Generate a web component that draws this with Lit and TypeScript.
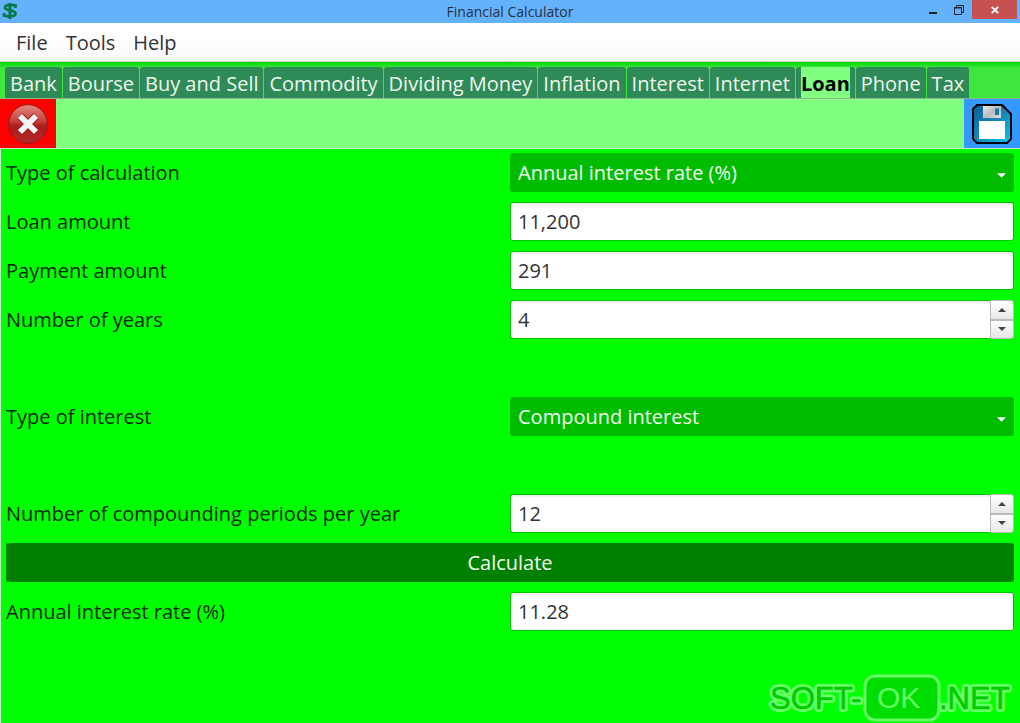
import { LitElement, html, css, svg } from "lit";
import { customElement, property, state } from "lit/decorators.js";

const TABS = [
  "Bank", "Bourse", "Buy and Sell", "Commodity", "Dividing Money", "Inflation",
  "Interest", "Internet", "Loan", "Phone", "Tax",
];

@customElement("number-spinner")
class NumberSpinner extends LitElement {
  @property({ type: Number }) value = 0;
  @property() label = "";

  static styles = css`
    :host { display: block; height: 39px; }
    .box { display: flex; height: 100%; box-sizing: border-box; }
    .input {
      flex: 1; min-width: 0; box-sizing: border-box; height: 100%;
      border: 1px solid #00c400; border-right: 0; border-radius: 3px 0 0 3px;
      padding: 0 7px; background: #fff; color: #333;
      font: inherit; appearance: textfield; outline: none;
      box-shadow: inset 0 2px 1px #eee;
    }
    .input::-webkit-inner-spin-button { appearance: none; margin: 0; }
    .steps { display: flex; flex-direction: column; width: 24px; }
    .step {
      flex: 1; display: grid; place-items: center; padding: 0;
      border: 1px solid #bbb; background: linear-gradient(#fff, #e6e6e6);
    }
    .step:first-child { border-radius: 0 3px 0 0; }
    .step:last-child { border-radius: 0 0 3px 0; }
    .arrow { display: block; width: 8px; height: 4px; fill: #444; }
  `;

  render() {
    return html`
      <div class="box">
        <input class="input" type="number" aria-label=${this.label} .value=${String(this.value)}
          @input=${(e: Event) => (this.value = Number((e.target as HTMLInputElement).value))} />
        <div class="steps">
          <button class="step" type="button" aria-label="Increase" @click=${() => this.value++}>
            <svg class="arrow" viewBox="0 0 8 4"><path d="M0 4L4 0L8 4Z" /></svg>
          </button>
          <button class="step" type="button" aria-label="Decrease" @click=${() => this.value--}>
            <svg class="arrow" viewBox="0 0 8 4"><path d="M0 0L4 4L8 0Z" /></svg>
          </button>
        </div>
      </div>
    `;
  }
}

@customElement("app-root")
class AppRoot extends LitElement {
  @state() private active = "Loan";

  static styles = css`
    :host {
      display: flex; flex-direction: column; min-height: 100vh; position: relative;
      font-family: "Open Sans", "Noto Sans", sans-serif; font-size: 20px; line-height: 28px;
      color: #002800; background: #0f0;
    }
    button { font: inherit; cursor: pointer; }
    .titlebar {
      display: grid; grid-template-columns: 1fr auto 1fr; height: 23px;
      background: #64b1fc; color: #26323f;
    }
    .logo { width: 16px; height: 18px; margin: 2px; }
    .title { margin: 0; font-size: 14px; line-height: 23px; font-weight: 400; }
    .window { display: flex; justify-content: flex-end; padding-right: 3px; }
    .win { border: 0; padding: 0; height: 19px; width: 26px; background: none; }
    .win svg { display: block; margin: auto; }
    .win.close { width: 45px; background: #c75050; }
    .menu {
      display: flex; gap: 18px; align-items: center; height: 39px; padding: 2px 0 0 16px;
      background: linear-gradient(#fff 30%, #f8f8f8); border-bottom: 1px solid #ccc;
      box-sizing: border-box;
    }
    .item { border: 0; padding: 0; background: none; color: #333; }
    .tabs {
      display: flex; gap: 1px; height: 37px; box-sizing: border-box; padding: 5px 5px 0;
      background: linear-gradient(#00d800, #3ee63e 6px); border-bottom: 1px solid #8fb48f;
    }
    .tab {
      border: 0; border-radius: 3px 3px 0 0; padding: 0 5px; background: #2e8b57;
      color: #eef6ee; white-space: nowrap;
    }
    .tab.active .name { background: #80ff80; color: #000; font-weight: 700; }
    .name { display: block; height: 31px; line-height: 33px; }
    .toolbar {
      display: flex; justify-content: space-between; height: 50px; box-sizing: border-box;
      background: #80ff80; border-bottom: 1px solid #c0e8c0;
    }
    .tool { display: grid; place-items: center; width: 56px; border: 0; padding: 0; }
    .tool svg { display: block; width: 42px; height: 42px; }
    .tool.cancel { background: #f00; }
    .tool.save { background: #3399ff; }
    .form {
      flex: 1; display: grid; grid-template-columns: 1fr 1fr; align-content: start;
      align-items: center; row-gap: 10px; padding: 4px 6px 0 5px; border-left: 1px solid #c8ecc8;
    }
    .row { height: 39px; line-height: 39px; }
    .spacer { grid-column: 1 / -1; height: 38px; }
    .field {
      width: 100%; height: 39px; box-sizing: border-box; padding: 0 7px; font: inherit; color: #333;
      background: #fff; border: 1px solid #00c400; border-radius: 3px; outline: none;
      box-shadow: inset 0 2px 1px #eee;
    }
    .pick { position: relative; height: 39px; }
    .select {
      width: 100%; height: 100%; box-sizing: border-box; padding: 0 8px; border: 0; border-radius: 3px;
      appearance: none; font: inherit; color: #f0fff0; background: #00bc00; outline: none;
    }
    .caret {
      position: absolute; right: 8px; top: 50%; width: 9px; height: 5px; fill: #fff; pointer-events: none;
    }
    .calculate {
      grid-column: 1 / -1; height: 39px; padding: 0; border: 0; border-radius: 3px;
      background: #008000; color: #f0fff0;
    }
    .mark { position: absolute; right: 8px; bottom: 0; width: 246px; height: 50px; pointer-events: none; }
    .mark text { font-family: "Liberation Sans", Arial, sans-serif; }
    .outline { fill: none; stroke: #66ff66; stroke-width: 6px; stroke-linejoin: round; }
    .fill { fill: #00cc00; stroke: #00cc00; stroke-width: 0.5px; }
    .ok { fill: #66ff66; }
  `;

  private select(id: string, options: string[]) {
    return html`
      <div class="pick">
        <select class="select" id=${id}>${options.map((o) => html`<option>${o}</option>`)}</select>
        <svg class="caret" viewBox="0 0 8 4"><path d="M0 0L4 4L8 0Z" /></svg>
      </div>
    `;
  }

  private watermark() {
    const words = (cls: string) => svg`
      <text class=${cls} x="4" y="36" font-size="31">SOFT-</text>
      <text class=${cls} x="173" y="36" font-size="31">.NET</text>`;
    return html`
      <svg class="mark" viewBox="0 0 246 50" aria-hidden="true">
        ${words("outline")}${words("fill")}
        <rect x="99" y="3" width="74" height="44" rx="10" fill="#00dd00" stroke="#66ff66" stroke-width="3" />
        <text class="ok" x="111" y="35" font-size="30">OK</text>
      </svg>
    `;
  }

  render() {
    return html`
      <header class="titlebar">
        <svg class="logo" viewBox="0 0 16 18" fill="none" stroke="#087a4c">
          <path d="M13.500 6V3.500C11 2.500 3 2.200 3 5.700C3 9 13.500 7.600 13.500 11.500C13.500 15 5 14.800 2 13.500V11" stroke-width="2.800" />
          <path d="M8 1V17" stroke-width="3" />
        </svg>
        <h1 class="title">Financial Calculator</h1>
        <div class="window">
          <button class="win" aria-label="Minimize">
            <svg width="10" height="10" viewBox="0 0 10 10"><path d="M1 7H9V9H1Z" fill="#222" /></svg>
          </button>
          <button class="win" aria-label="Restore">
            <svg width="12" height="10" viewBox="0 0 12 10" fill="none" stroke="#222">
              <path d="M3.500 2V.500H10.500V7.500H9" /><path d="M1.500 2.500H8.500V9.500H1.500Z" /><path d="M1 3H9" />
            </svg>
          </button>
          <button class="win close" aria-label="Close window">
            <svg width="8" height="8" viewBox="0 0 8 8"><path d="M.8 .8L7.200 7.200M7.200 .8L.8 7.200" stroke="#fff" stroke-width="1.900" /></svg>
          </button>
        </div>
      </header>
      <nav class="menu">
        ${["File", "Tools", "Help"].map((m) => html`<button class="item">${m}</button>`)}
      </nav>
      <div class="tabs" role="tablist">
        ${TABS.map((t) => html`
          <button class="tab ${t === this.active ? "active" : ""}" role="tab"
            aria-selected=${t === this.active ? "true" : "false"}
            @click=${() => (this.active = t)}><span class="name">${t}</span></button>`)}
      </div>
      <div class="toolbar">
        <button class="tool cancel" aria-label="Close calculator">
          <svg viewBox="0 0 42 42">
            <defs>
              <linearGradient id="ball" x2="0" y2="1">
                <stop offset="0" stop-color="#e58a84" /><stop offset=".45" stop-color="#c43c36" />
                <stop offset=".55" stop-color="#a91e1b" /><stop offset="1" stop-color="#b52a28" />
              </linearGradient>
            </defs>
            <circle cx="21" cy="21" r="19.300" fill="url(#ball)" stroke="#8c1d1a" />
            <path d="M13 13L29 29M29 13L13 29" stroke="#8f1815" stroke-width="7.500" />
            <path d="M13 13L29 29M29 13L13 29" stroke="#f2f2f2" stroke-width="6" />
          </svg>
        </button>
        <button class="tool save" aria-label="Save">
          <svg viewBox="0 0 42 42">
            <defs>
              <linearGradient id="disk" x2="1" y2="1">
                <stop offset="0" stop-color="#075f91" /><stop offset=".5" stop-color="#1686b8" />
                <stop offset="1" stop-color="#00c8f4" />
              </linearGradient>
              <linearGradient id="metal" x2="1" y2="1">
                <stop offset="0" stop-color="#eee" /><stop offset=".5" stop-color="#bbb" /><stop offset="1" stop-color="#ddd" />
              </linearGradient>
            </defs>
            <path d="M6 2H31L40 11V36L36 40H6L2 36V6Z" fill="url(#disk)" stroke="#000" stroke-width="2" stroke-linejoin="round" />
            <path d="M12 3H30V15H12Z" fill="url(#metal)" /><path d="M24 5.500H28V12H24Z" fill="#1976a8" />
            <path d="M8 18H34V36H8Z" fill="#fff" />
          </svg>
        </button>
      </div>
      <main class="form">
        <label class="row" for="kind">Type of calculation</label>
        ${this.select("kind", ["Annual interest rate (%)", "Loan amount", "Payment amount", "Number of years"])}
        <label class="row" for="loan">Loan amount</label>
        <input class="field" id="loan" value="11,200" />
        <label class="row" for="payment">Payment amount</label>
        <input class="field" id="payment" value="291" />
        <label class="row" for="years">Number of years</label>
        <number-spinner id="years" label="Number of years" .value=${4}></number-spinner>
        <div class="spacer"></div>
        <label class="row" for="interest">Type of interest</label>
        ${this.select("interest", ["Compound interest", "Simple interest"])}
        <div class="spacer"></div>
        <label class="row" for="periods">Number of compounding periods per year</label>
        <number-spinner id="periods" label="Number of compounding periods per year" .value=${12}></number-spinner>
        <button class="calculate" type="button">Calculate</button>
        <label class="row" for="rate">Annual interest rate (%)</label>
        <input class="field" id="rate" value="11.28" readonly />
      </main>
      ${this.watermark()}
    `;
  }
}
